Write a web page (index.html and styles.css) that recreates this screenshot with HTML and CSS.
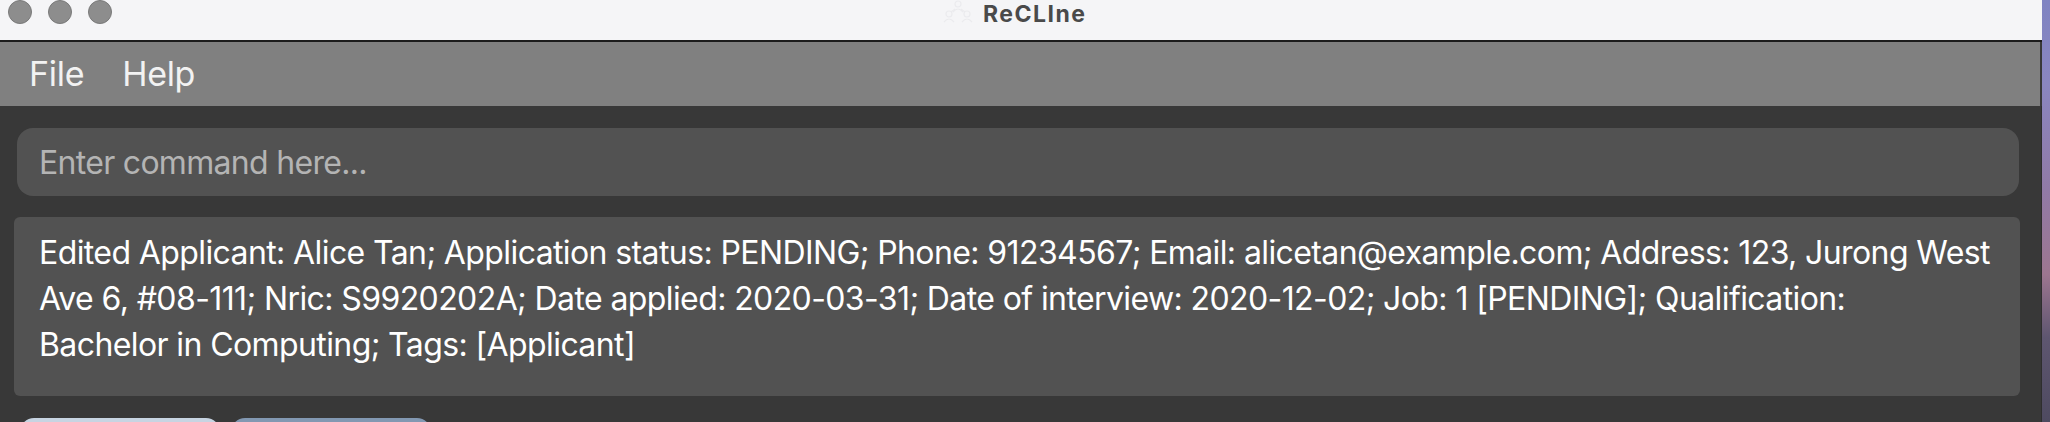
FILE: index.html
```html
<!DOCTYPE html>
<html>
<head>
<meta charset="utf-8">
<link rel="stylesheet" href="styles.css">
</head>
<body>
<div class="window">
  <div class="titlebar">
    <div class="lights">
      <span class="light"></span><span class="light"></span><span class="light"></span>
    </div>
    <div class="title-group">
      <svg class="app-icon" width="30" height="24" viewBox="0 0 30 24" fill="none" stroke="#ebebee" stroke-width="1.2">
        <circle cx="15" cy="4" r="3"/>
        <path d="M10 12 q5-6 10 0"/>
        <circle cx="6" cy="14" r="3"/>
        <path d="M1 22 q5-6 10 0"/>
        <circle cx="24" cy="14" r="3"/>
        <path d="M19 22 q5-6 10 0"/>
        <path d="M12 9 L8 12 M18 9 L22 12"/>
      </svg>
      <span class="title">ReCLIne</span>
    </div>
  </div>
  <div class="menubar">
    <span class="menu-item">File</span>
    <span class="menu-item">Help</span>
  </div>
  <div class="content">
    <div class="command-box">
      <span class="placeholder">Enter command here...</span>
    </div>
    <div class="result-box">
      <p class="result-text">Edited Applicant: Alice Tan; Application status: PENDING; Phone: 91234567; Email: alicetan@example.com; Address: 123, Jurong West<br>Ave 6, #08-111; Nric: S9920202A; Date applied: 2020-03-31; Date of interview: 2020-12-02; Job: 1 [PENDING]; Qualification:<br>Bachelor in Computing; Tags: [Applicant]</p>
    </div>
    <div class="tabs">
      <div class="tab tab-light"></div>
      <div class="tab tab-dark"></div>
    </div>
  </div>
</div>
</body>
</html>
```
FILE: styles.css
```css
html, body {
  margin: 0;
  padding: 0;
  height: 422px;
  overflow: hidden;
}
body {
  width: 2050px;
  display: flex;
  background: linear-gradient(180deg, #7f83c2 0%, #8a86c0 20%, #917aa6 45%, #9d7690 65%, #5e5670 80%, #4e4a60 100%);
  font-family: Inter, Roboto, "Liberation Sans", sans-serif;
}
.window {
  width: 2042px;
  height: 422px;
  display: flex;
  flex-direction: column;
  background: #383838;
  flex: none;
  overflow: hidden;
}
.titlebar {
  height: 40px;
  background: #f5f5f7;
  border-bottom: 2px solid #1c1c1c;
  display: flex;
  align-items: flex-start;
  flex: none;
}
.lights {
  display: flex;
  gap: 16px;
  padding-left: 8px;
  width: 112px;
}
.light {
  width: 22px;
  height: 22px;
  border-radius: 50%;
  background: #8d8d8d;
  border: 1px solid #7a7a7a;
}
.title-group {
  display: flex;
  align-items: flex-start;
  gap: 10px;
  margin-left: 823px;
  margin-top: 0;
}
.app-icon {
  display: block;
}
.title {
  font-weight: 700;
  font-size: 23px;
  color: #4a4a4a;
  line-height: 28px;
  letter-spacing: 1.5px;
}
.menubar {
  height: 64px;
  background: #808080;
  border-right: 1px solid #3a3a3a;
  margin-right: 1px;
  display: flex;
  align-items: center;
  padding-left: 29px;
  gap: 38px;
  flex: none;
}
.menu-item {
  font-size: 34px;
  color: #f2f2f2;
  line-height: 40px;
  letter-spacing: -0.3px;
}
.content {
  flex: 1;
  display: flex;
  flex-direction: column;
  border-right: 1px solid #2e2e2e;
}
.command-box {
  margin: 22px 22px 0 17px;
  height: 68px;
  background: #525252;
  border-radius: 16px;
  display: flex;
  align-items: center;
  padding-left: 22px;
  flex: none;
}
.placeholder {
  font-size: 32px;
  color: #b4b4b4;
  letter-spacing: -0.7px;
}
.result-box {
  margin: 21px 21px 0 14px;
  height: 179px;
  background: #525252;
  border-radius: 6px;
  padding: 13px 0 0 25px;
  box-sizing: border-box;
  flex: none;
}
.result-text {
  margin: 0;
  font-size: 32px;
  line-height: 46px;
  color: #ffffff;
  letter-spacing: -0.6px;
  white-space: nowrap;
}
.tabs {
  display: flex;
  gap: 11px;
  margin: 22px 0 0 20px;
  flex: none;
}
.tab {
  width: 200px;
  height: 40px;
  border-radius: 14px;
}
.tab-light {
  background: #c7d4e2;
}
.tab-dark {
  background: #8298b2;
}
```
